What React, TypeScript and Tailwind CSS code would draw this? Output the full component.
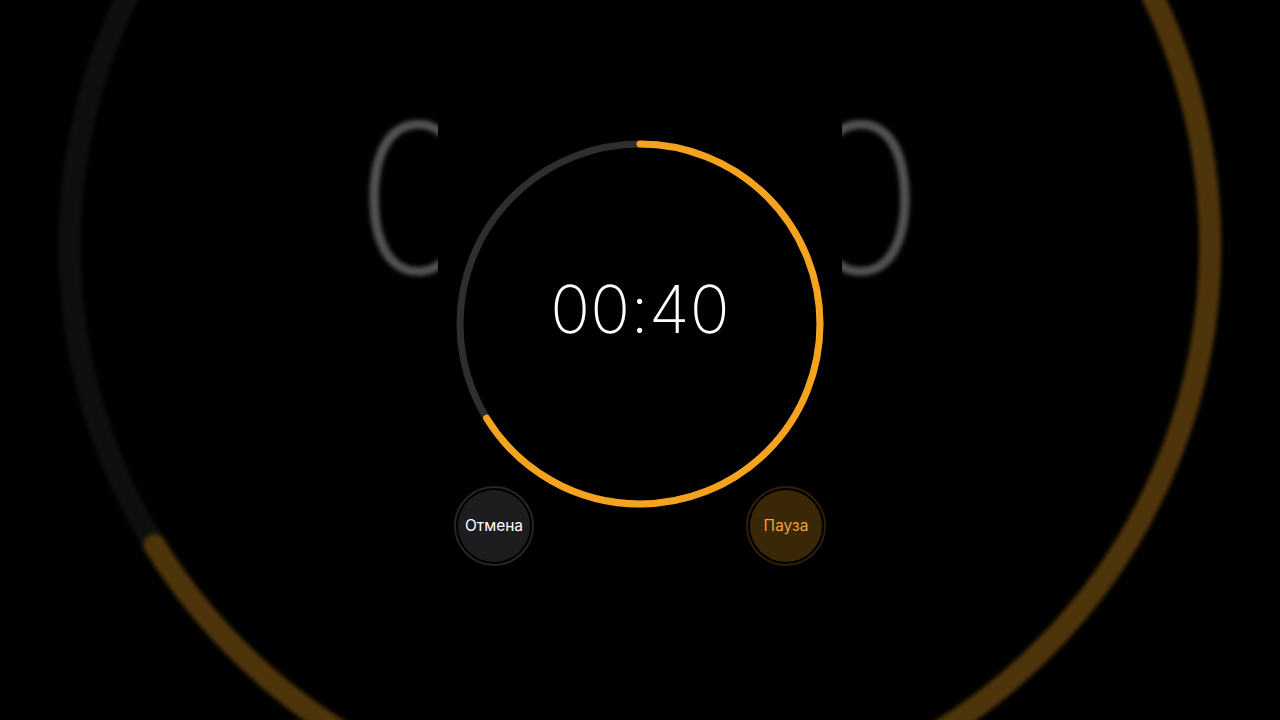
import React from "react";

const RADIUS = 180;
const PROGRESS = 0.662;

function Timer() {
  const circumference = 2 * Math.PI * RADIUS;

  return (
    <div className="w-[404px] h-[720px] flex flex-col items-center bg-black font-['Inter','Roboto',sans-serif]">
      {/* Ring */}
      <div className="relative mt-[140px] w-[368px] h-[368px]">
        <svg width="368" height="368" viewBox="0 0 368 368">
          <circle cx="184" cy="184" r={RADIUS} fill="none" stroke="#2e2e30" strokeWidth="7" />
          <circle
            cx="184"
            cy="184"
            r={RADIUS}
            fill="none"
            stroke="#f5a31e"
            strokeWidth="7"
            strokeLinecap="round"
            strokeDasharray={`${circumference * PROGRESS} ${circumference}`}
            transform="rotate(-90 184 184)"
          />
        </svg>
        <div className="absolute inset-0 flex items-center justify-center pb-[31px]">
          <span className="text-white text-[66px] font-extralight leading-none tracking-[0.3px]">00:40</span>
        </div>
      </div>

      {/* Buttons */}
      <div className="w-full px-4 -mt-[22px] flex justify-between">
        <div className="w-[80px] h-[80px] rounded-full border-2 border-[#262628] p-[2px]">
          <div className="w-full h-full rounded-full bg-[#1d1d1f] flex items-center justify-center text-white text-[15.5px]">
            Отмена
          </div>
        </div>
        <div className="w-[80px] h-[80px] rounded-full border-2 border-[#2e1f06] p-[2px]">
          <div className="w-full h-full rounded-full bg-[#3a2707] flex items-center justify-center text-[#f0a138] text-[15.5px]">
            Пауза
          </div>
        </div>
      </div>
    </div>
  );
}

export default function App() {
  return (
    <div className="relative w-full h-[720px] bg-black overflow-hidden">
      {/* blurred, zoomed backdrop */}
      <div className="absolute inset-0 flex items-center justify-center">
        <div className="shrink-0 scale-[3.168] brightness-[0.32] blur-[0.6px]">
          <Timer />
        </div>
      </div>

      {/* video panel */}
      <div className="relative z-10 mx-auto w-[404px] h-[720px]">
        <Timer />
      </div>
    </div>
  );
}
